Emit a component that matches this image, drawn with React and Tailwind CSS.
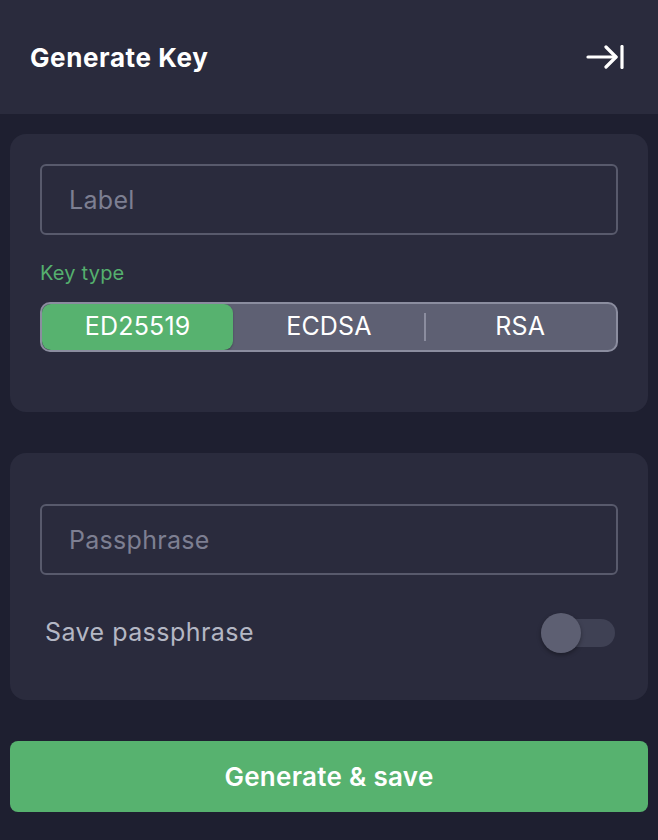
import { useState } from 'react';

const KEY_TYPES = ['ED25519', 'ECDSA', 'RSA'];

function CollapseIcon() {
  return (
    <svg width="38" height="24" viewBox="0 0 38 24" fill="none" stroke="white" strokeWidth="3.2" strokeLinecap="round" strokeLinejoin="round">
      <path d="M2 12h28" />
      <path d="M20 2l10 10-10 10" />
      <path d="M36 1.5v21" />
    </svg>
  );
}

export default function App() {
  const [keyType, setKeyType] = useState('ED25519');
  const [savePass, setSavePass] = useState(false);

  return (
    <div className="min-h-[840px] bg-[#1e1f30] font-['Inter','Liberation_Sans',sans-serif]">
      <header className="h-[114px] bg-[#2a2b3d] pl-[30px] pr-[34px] flex items-center justify-between">
        <h1 className="text-[26px] font-bold text-white tracking-[0.6px]">Generate Key</h1>
        <button className="flex items-center">
          <CollapseIcon />
        </button>
      </header>

      <main className="px-[10px] pt-[20px]">
        <section className="bg-[#2a2b3d] rounded-2xl px-[30px] pt-[30px] pb-[60px]">
          <input
            placeholder="Label"
            className="w-full h-[71px] border-2 border-[#585a6c] rounded-md bg-transparent pl-[27px] text-[25px] tracking-[0.3px] text-white placeholder:text-[#7d7f92] outline-none"
          />
          <p className="mt-[27px] text-[20px] leading-[22px] tracking-[0.2px] text-[#55b06e]">Key type</p>
          <div className="mt-[18px] h-[50px] border-2 border-[#8b8d9f] rounded-[10px] bg-[#5e6073] grid grid-cols-3 overflow-hidden">
            {KEY_TYPES.map((t, i) => {
              const active = keyType === t;
              const nextActive = KEY_TYPES[i + 1] === keyType;
              return (
                <button
                  key={t}
                  onClick={() => setKeyType(t)}
                  className={`relative text-[25px] tracking-[0.2px] text-white flex items-center justify-center ${active ? 'bg-[#57b26f] rounded-[9px] shadow-[0_1px_2px_rgba(0,0,0,0.3)]' : ''}`}
                >
                  {t}
                  {i < KEY_TYPES.length - 1 && !active && !nextActive && (
                    <span className="absolute right-[-1px] top-[9px] h-[28px] w-[2px] bg-[#8b8d9f]" />
                  )}
                </button>
              );
            })}
          </div>
        </section>

        <section className="mt-[41px] bg-[#2a2b3d] rounded-2xl px-[30px] pt-[51px] pb-[47px]">
          <input
            type="password"
            placeholder="Passphrase"
            className="w-full h-[71px] border-2 border-[#585a6c] rounded-md bg-transparent pl-[27px] text-[25px] tracking-[0.3px] text-white placeholder:text-[#7d7f92] outline-none"
          />
          <div className="mt-[38px] flex items-center justify-between pl-[5px] pr-[3px]">
            <span className="text-[25px] tracking-[0.45px] text-[#b4b7c4]">Save passphrase</span>
            <button
              onClick={() => setSavePass(!savePass)}
              className="relative w-[74px] h-[40px] flex items-center"
            >
              <span className="absolute left-0 right-0 h-[28px] rounded-full bg-[#3f4154]" />
              <span className={`absolute top-0 w-[40px] h-[40px] rounded-full shadow-[0_2px_4px_rgba(0,0,0,0.35)] ${savePass ? 'right-0 bg-[#57b26f]' : 'left-0 bg-[#5d5f72]'}`} />
            </button>
          </div>
        </section>

        <button className="mt-[41px] w-full h-[71px] rounded-lg bg-[#57b26f] text-[26px] tracking-[0.3px] font-semibold text-white">
          Generate &amp; save
        </button>
      </main>
    </div>
  );
}
